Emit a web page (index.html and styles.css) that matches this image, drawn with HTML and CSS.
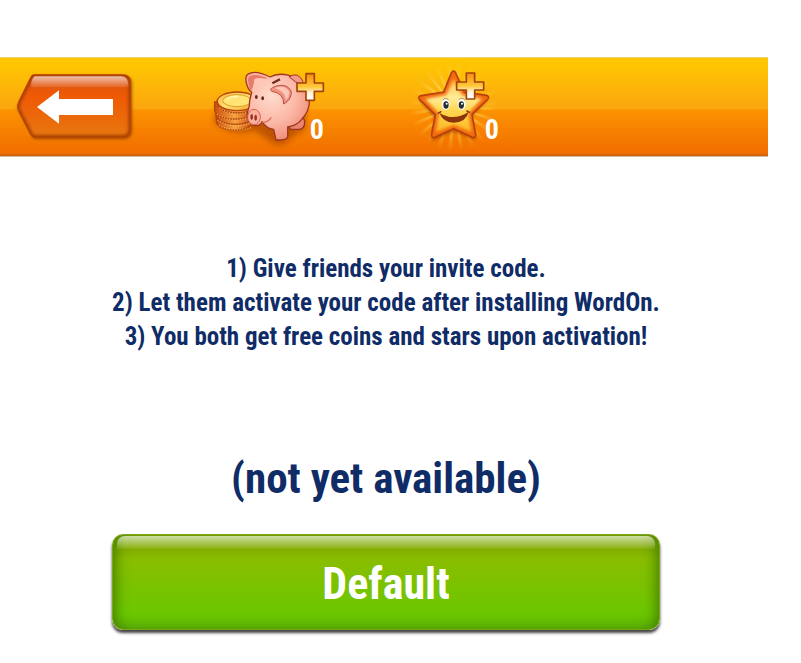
FILE: index.html
```html
<!DOCTYPE html>
<html lang="en">
<head>
<meta charset="utf-8">
<title>WordOn invite</title>
<link rel="stylesheet" href="styles.css">
</head>
<body>
<div class="page">
  <header class="topbar">
    <button class="icon-button back" type="button" aria-label="Back">
      <svg viewBox="0 21 450 297" width="150" height="99" aria-hidden="true">
        <defs>
          <linearGradient id="backFill" x1="0" y1="0" x2="0" y2="1">
            <stop offset="0" stop-color="#d65214"/><stop offset=".35" stop-color="#ef5a04"/><stop offset="1" stop-color="#e67a10"/>
          </linearGradient>
          <linearGradient id="gloss" x1="0" y1="0" x2="0" y2="1">
            <stop offset="0" stop-color="#fff" stop-opacity=".65"/><stop offset="1" stop-color="#fff" stop-opacity=".08"/>
          </linearGradient>
          <filter id="soft" x="-20%" y="-20%" width="140%" height="140%"><feGaussianBlur stdDeviation="5"/></filter>
          <filter id="softer" x="-20%" y="-20%" width="140%" height="140%"><feGaussianBlur stdDeviation="9"/></filter>
          <clipPath id="backClip"><path d="M100 74H368Q392 74 392 98V238Q392 262 368 262H102Q96 262 92 254L56 184Q49 170 56 155L90 86Q95 74 100 74Z"/></clipPath>
        </defs>
        <path d="M100 78H370Q396 78 396 100V242Q396 267 370 267H102L51 172Z" fill="#863900" opacity=".75" filter="url(#soft)"/>
        <g clip-path="url(#backClip)">
          <path d="M40 70H400V270H40Z" fill="url(#backFill)"/>
          <path d="M100 74H368Q392 74 392 98V238Q392 262 368 262H102Q96 262 92 254L56 184Q49 170 56 155L90 86Q95 74 100 74Z" fill="none" stroke="#a93c04" stroke-width="14" filter="url(#soft)"/>
          <path d="M104 79H364Q386 79 386 112H92Q94 86 104 79Z" fill="url(#gloss)"/>
        </g>
        <path d="M100 74H368Q392 74 392 98V238Q392 262 368 262H102Q96 262 92 254L56 184Q49 170 56 155L90 86Q95 74 100 74Z" fill="none" stroke="#b84705" stroke-width="3"/>
        <path d="M111 171L177 121V147H339V195H177V221Z" fill="#fff"/>
      </svg>
    </button>
    <button class="icon-button coins" type="button" aria-label="Add coins">
      <svg viewBox="0 -9 390 297" width="130" height="99" aria-hidden="true">
        <defs>
          <radialGradient id="pig" cx=".4" cy=".35" r=".7">
            <stop offset="0" stop-color="#ffdccd"/><stop offset=".55" stop-color="#fcb9a8"/><stop offset="1" stop-color="#ef8a75"/>
          </radialGradient>
          <linearGradient id="coin" x1="0" y1="0" x2="1" y2="1">
            <stop offset="0" stop-color="#ffb63c"/><stop offset=".5" stop-color="#ffe070"/><stop offset="1" stop-color="#f59a21"/>
          </linearGradient>
          <linearGradient id="coinSide" x1="0" y1="0" x2="1" y2="0">
            <stop offset="0" stop-color="#c9500c"/><stop offset=".5" stop-color="#f7a040"/><stop offset="1" stop-color="#c4480c"/>
          </linearGradient>
          <linearGradient id="plus" x1="0" y1="0" x2="0" y2="1">
            <stop offset="0" stop-color="#f58b12"/><stop offset=".5" stop-color="#ffc93a"/><stop offset=".72" stop-color="#fff2d9"/><stop offset="1" stop-color="#fff"/>
          </linearGradient>
        </defs>
        <path d="M28 185Q75 230 150 212L205 250Q240 264 255 235L300 208V130H40Z" fill="#a54300" opacity=".7" filter="url(#softer)"/>
        <g stroke="#b5450c" stroke-width="4" fill="url(#coinSide)">
          <path d="M34 162V184C38 220 140 218 145 184V160Z"/>
          <path d="M33 145V166C38 202 143 202 148 166V145Z"/>
          <path d="M29 126V150C35 187 144 187 149 150V126Z"/>
          <path d="M37 120V132C42 167 150 169 158 132V120Z"/>
          <ellipse cx="96" cy="124" rx="59" ry="28" fill="url(#coin)"/>
        </g>
        <g fill="none" stroke="#ffd267" stroke-width="5" stroke-dasharray="3 5" opacity=".7">
          <path d="M43 144Q91 173 145 151"/><path d="M36 162Q82 191 142 170"/><path d="M38 181Q83 209 140 188"/><path d="M42 196Q84 219 138 203"/>
        </g>
        <ellipse cx="96" cy="122" rx="43" ry="18" fill="#ffe374" stroke="#e39c28" stroke-width="3"/>
        <path d="M66 120Q75 108 100 109" fill="none" stroke="#fff5ae" stroke-width="5"/>
        <path d="M245 190L257 208H284Q300 206 299 183L289 160Z" fill="#eb866e" stroke="#a13523" stroke-width="4"/>
        <path d="M140 97C124 84 117 50 128 43Q150 28 195 51C224 35 270 44 289 70Q314 91 313 122Q314 153 290 178Q278 195 248 201L248 231Q244 241 213 240L206 208Q185 207 171 185Q166 199 150 196C128 191 123 169 129 151Q134 140 134 122Z" fill="url(#pig)" stroke="#a13523" stroke-width="4" stroke-linejoin="round"/>
        <path d="M252 50Q281 34 294 65Q288 76 272 66Z" fill="#f29b89" stroke="#a13523" stroke-width="3"/>
        <path d="M136 91Q123 54 134 48Q157 39 190 56Q153 50 139 92Z" fill="#e87b6a"/>
        <path d="M148 57Q168 49 188 61Q161 65 143 92Z" fill="#ffc5b5"/>
        <path d="M196 88C210 74 249 67 259 96Q259 120 236 132Q237 99 200 94Z" fill="#ef9282" stroke="#b9503e" stroke-width="3"/>
        <path d="M209 84Q241 72 253 96Q253 110 243 120Q240 94 209 84Z" fill="#fdc6b6"/>
        <ellipse cx="147" cy="171" rx="19" ry="23" fill="#fbb09e" stroke="#cf6550" stroke-width="3"/>
        <ellipse cx="140" cy="171" rx="4" ry="9" fill="#943325"/><ellipse cx="152" cy="173" rx="4" ry="9" fill="#943325"/>
        <path d="M170 187Q188 189 199 172" fill="none" stroke="#d9705a" stroke-width="4"/>
        <path d="M202 70L225 58" stroke="#6e2b1e" stroke-width="7"/>
        <ellipse cx="154" cy="111" rx="4" ry="6" fill="#61231a"/><ellipse cx="173" cy="115" rx="4" ry="6" fill="#61231a"/>
        <path d="M303 41H328V69H355V94H328V121H303V94H276V69H303Z" fill="url(#plus)" stroke="#a44308" stroke-width="5" stroke-linejoin="round"/>
      </svg>
      <span class="count">0</span>
    </button>
    <button class="icon-button stars" type="button" aria-label="Add stars">
      <svg viewBox="0 6 315 297" width="105" height="99" aria-hidden="true">
        <defs>
          <linearGradient id="starFill" x1="0" y1="0" x2="0" y2="1">
            <stop offset="0" stop-color="#ffad25"/><stop offset=".4" stop-color="#ffec96"/><stop offset=".6" stop-color="#ffd64e"/><stop offset="1" stop-color="#ffae1c"/>
          </linearGradient>
          <radialGradient id="rayFade" cx="146" cy="155" r="135" gradientUnits="userSpaceOnUse">
            <stop offset=".4" stop-color="#ffe58a" stop-opacity=".6"/><stop offset="1" stop-color="#ffd24c" stop-opacity="0"/>
          </radialGradient>
          <clipPath id="starClip"><path d="M139 54Q146 43 152 54L178 111L245 121Q256 126 246 135L201 178L212 239Q212 251 200 246L146 221L90 247Q79 250 80 237L91 179L44 134Q37 125 49 122L116 111Z"/></clipPath>
        </defs>
        <circle cx="146" cy="155" r="90" fill="none" stroke="url(#rayFade)" stroke-width="90" stroke-dasharray="9 15"/>
        <path d="M146 54L176 114L250 126L199 177L211 247L146 221L80 250L90 180L41 126L116 111Z" transform="translate(0 8)" fill="#9d4300" opacity=".75" filter="url(#soft)"/>
        <path d="M139 54Q146 43 152 54L178 111L245 121Q256 126 246 135L201 178L212 239Q212 251 200 246L146 221L90 247Q79 250 80 237L91 179L44 134Q37 125 49 122L116 111Z" fill="url(#starFill)"/>
        <g clip-path="url(#starClip)">
          <path d="M146 48L178 111L250 125L201 178L212 247L146 221L80 248L91 179L41 126L116 111Z" fill="none" stroke="#f16a08" stroke-width="20" filter="url(#soft)"/>
        </g>
        <path d="M139 54Q146 43 152 54L178 111L245 121Q256 126 246 135L201 178L212 239Q212 251 200 246L146 221L90 247Q79 250 80 237L91 179L44 134Q37 125 49 122L116 111Z" fill="none" stroke="#b8400a" stroke-width="5"/>
        <ellipse cx="122" cy="148" rx="12" ry="17" fill="#fff"/><ellipse cx="170" cy="148" rx="12" ry="17" fill="#fff"/>
        <ellipse cx="123" cy="150" rx="8" ry="11" fill="#252d30"/><ellipse cx="169" cy="150" rx="8" ry="11" fill="#252d30"/>
        <circle cx="125" cy="146" r="3" fill="#fff"/><circle cx="171" cy="146" r="3" fill="#fff"/>
        <path d="M113 136Q121 125 131 135M161 135Q170 125 181 136" fill="none" stroke="#9a5a20" stroke-width="2"/>
        <path d="M103 173Q146 201 191 170Q184 201 146 203Q113 201 103 173Z" fill="#8c350b"/>
        <path d="M98 176L109 169M184 167L195 173" stroke="#8c350b" stroke-width="4"/>
        <path d="M184 54H209V81H236V105H209V132H184V105H155V81H184Z" fill="url(#plus)" stroke="#a44308" stroke-width="5" stroke-linejoin="round"/>
      </svg>
      <span class="count">0</span>
    </button>
  </header>
  <main class="content">
    <ol class="steps">
      <li>1) Give friends your invite code.</li>
      <li>2) Let them activate your code after installing WordOn.</li>
      <li>3) You both get free coins and stars upon activation!</li>
    </ol>
    <p class="code">(not yet available)</p>
    <button class="action" type="button">Default</button>
  </main>
</div>
</body>
</html>
```
FILE: styles.css
```css
* { box-sizing: border-box; }
body {
  margin: 0;
  background: #fff;
  color: #102c67;
  font-family: "Liberation Sans Narrow", "Roboto Condensed", "Open Sans Condensed", "Liberation Sans", sans-serif;
  font-weight: 700;
}
button { font: inherit; cursor: pointer; }
.page { padding: 57px 33px 24px 0; }
.topbar {
  display: flex;
  background: linear-gradient(#ffca00 0%, #fba60e 52%, #fc9200 54%, #f16e00 97%, #c96010 100%);
  box-shadow: inset 0 1px #efd070, 0 1px #d8b8a0;
}
.icon-button { position: relative; padding: 0; border: 0; background: none; }
.icon-button svg { display: block; }
.coins { margin-left: 55px; }
.stars { margin-left: 70px; }
.count {
  position: absolute;
  right: 11px;
  bottom: 11px;
  color: #fff;
  font-size: 28px;
  line-height: 30px;
}
.content {
  display: flex;
  flex-direction: column;
  padding: 96px 108px 0 112px;
  text-align: center;
}
.steps {
  margin: 0 -8px;
  padding: 0;
  list-style: none;
  font-size: 25px;
  line-height: 34px;
}
.code { margin: 92px 0 24px; font-size: 43px; line-height: 64px; }
.action {
  position: relative;
  height: 96px;
  padding: 4px 0 0;
  border: 1px solid #7da51c;
  border-radius: 11px;
  color: #fff;
  font-size: 44px;
  background: linear-gradient(#7da800, #83ae00 16%, #89bd00 26%, #6bc700 84%, #5db006);
  box-shadow: inset 10px 0 14px -8px #3f7800, inset -10px 0 14px -8px #3f7800, 0 3px 3px #444;
}
.action::before {
  content: "";
  position: absolute;
  inset: 1px 4px auto;
  height: 13px;
  border-radius: 8px 8px 0 0;
  background: linear-gradient(rgba(255, 255, 255, .65), rgba(255, 255, 255, .05));
}
```
